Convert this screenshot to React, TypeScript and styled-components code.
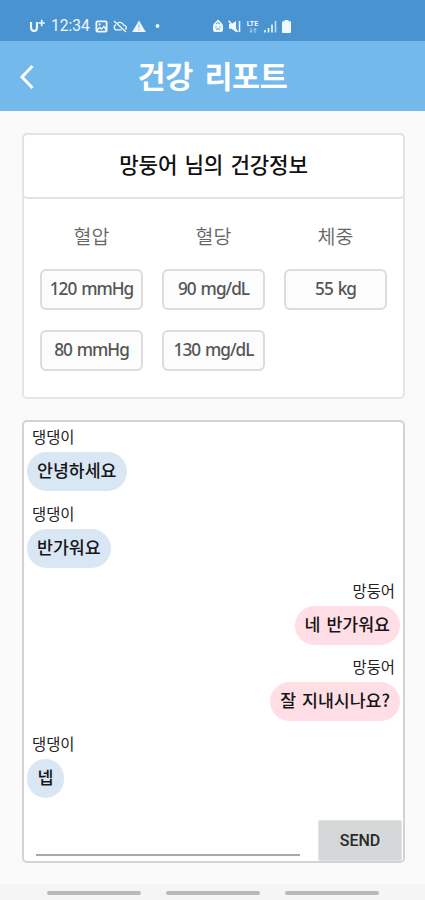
import React from "react";
import styled, { createGlobalStyle } from "styled-components";

const korean = `"Noto Sans CJK KR", sans-serif`;

const GlobalStyle = createGlobalStyle`
  * { box-sizing: border-box; }
  body { margin: 0; background: #fafafa; font-family: ${korean}; }
`;

const Screen = styled.div`
  width: 425px;
  height: 900px;
  display: flex;
  flex-direction: column;
  background: #fafafa;
  overflow: hidden;
`;

const StatusBar = styled.div`
  flex: none;
  height: 41px;
  padding: 11px 0 0 29px;
  display: flex;
  background: #4a93d1;
  color: #eef8ff;
`;

const StatusGroup = styled.div<{ $width: number; $gap: number }>`
  width: ${(p) => p.$width}px;
  height: 30px;
  display: flex;
  align-items: center;
  gap: ${(p) => p.$gap}px;
`;

const Clock = styled.span`
  width: 39px;
  font: 400 15.6px/30px Roboto, sans-serif;
`;

const Network = styled.span`
  display: flex;
  flex-direction: column;
  align-items: center;
  gap: 1px;
  width: 13px;
  font: 700 7.2px/7px Roboto, sans-serif;
`;

const Header = styled.header`
  flex: none;
  height: 70px;
  display: grid;
  grid-template-columns: 54px 1fr 54px;
  align-items: center;
  background: #73b9eb;
  color: #fff;
`;

const BackButton = styled.button`
  height: 70px;
  padding: 2px 0 0;
  border: 0;
  background: none;
  color: inherit;
  display: flex;
  align-items: center;
  justify-content: center;
`;

const Title = styled.h1`
  margin: 0;
  padding-bottom: 2px;
  font-size: 30.5px;
  font-weight: 700;
  line-height: 66px;
  letter-spacing: -0.4px;
  word-spacing: 5px;
  text-align: center;
`;

const Main = styled.main`
  flex: 1;
  padding: 22px 20px 0 22px;
  display: flex;
  flex-direction: column;
  gap: 21px;
`;

const Card = styled.section<{ $height: number; $line: string }>`
  height: ${(p) => p.$height}px;
  display: flex;
  flex-direction: column;
  border: 2px solid ${(p) => p.$line};
  border-radius: 5px;
  background: #fff;
`;

const CardTitle = styled.h2`
  height: 66px;
  margin: -2px -2px 0;
  border: 2px solid #e3e3e3;
  border-radius: 5px;
  font-size: 21.2px;
  font-weight: 500;
  line-height: 58px;
  letter-spacing: -0.2px;
  word-spacing: 2.8px;
  text-align: center;
  color: #111;
`;

const Metrics = styled.div`
  padding: 21px 16px 0;
  display: grid;
  grid-template-columns: repeat(3, 103px);
  column-gap: 19px;
`;

const Metric = styled.div`
  display: flex;
  flex-direction: column;
  gap: 20px;
`;

const MetricLabel = styled.div`
  height: 29px;
  font-size: 19.5px;
  font-weight: 350;
  line-height: 31px;
  text-align: center;
  color: #666;
`;

const Value = styled.div`
  height: 41px;
  border: 2px solid #dcdcdc;
  border-radius: 6px;
  background: #fcfcfc;
  color: #555;
  font: 500 17.2px/36px "Noto Sans", sans-serif;
  letter-spacing: -1px;
  word-spacing: 1.5px;
  white-space: nowrap;
  text-align: center;
`;

const Messages = styled.div`
  flex: 1;
  padding: 3px 3px 0;
`;

const Message = styled.div<{ $mine: boolean }>`
  height: 76.8px;
  display: flex;
  flex-direction: column;
  align-items: ${(p) => (p.$mine ? "flex-end" : "flex-start")};
`;

const Sender = styled.div`
  height: 27px;
  padding: 0 5px;
  font-size: 15.4px;
  line-height: 22px;
  color: #222;
`;

const Bubble = styled.div<{ $mine: boolean }>`
  height: 39px;
  min-width: 37px;
  padding: 0 10px;
  border-radius: 20px;
  background: ${(p) => (p.$mine ? "#ffdfe5" : "#d9e7f5")};
  color: #161616;
  font-size: 17.3px;
  font-weight: 500;
  line-height: 36px;
  word-spacing: 2px;
  text-align: center;
`;

const Composer = styled.form`
  height: 42px;
  padding: 0 1px 0 12px;
  display: flex;
  justify-content: space-between;
`;

const MessageInput = styled.input`
  width: 264px;
  height: 36px;
  margin-top: 1px;
  padding: 0;
  border: 0;
  border-bottom: 2px solid #a9a9a9;
  border-radius: 0;
  background: transparent;
  outline: 0;
  font: 16px ${korean};
`;

const SendButton = styled.button`
  width: 84px;
  height: 41px;
  margin-top: 1px;
  padding: 0;
  border: 1px solid #e1e3e3;
  border-radius: 2px;
  background: #d5d8d8;
  color: #2a2a2a;
  font: 500 16px/38px Roboto, sans-serif;
`;

const NavBar = styled.nav`
  flex: none;
  height: 16px;
  padding: 7px 46px 0 47px;
  display: flex;
  justify-content: space-between;
  background: #f5f5f5;
`;

const NavPill = styled.span`
  width: 94px;
  height: 4px;
  border-radius: 2px;
  background: #b9b9b9;
`;

const metrics = [
  { label: "혈압", values: ["120 mmHg", "80 mmHg"] },
  { label: "혈당", values: ["90 mg/dL", "130 mg/dL"] },
  { label: "체중", values: ["55 kg"] },
];

const messages = [
  { sender: "댕댕이", text: "안녕하세요", mine: false },
  { sender: "댕댕이", text: "반가워요", mine: false },
  { sender: "망둥어", text: "네 반가워요", mine: true },
  { sender: "망둥어", text: "잘 지내시나요?", mine: true },
  { sender: "댕댕이", text: "넵", mine: false },
];

const CarrierLogo = () => (
  <svg width="17" height="14" viewBox="0 0 17 14" fill="none" stroke="currentColor" role="img" aria-label="U+">
    <path d="M2 3v5.5Q2 12 5 12t3-3.500V3" strokeWidth="2.1" />
    <path d="M12.700.8v6.400M9.500 4h6.400" strokeWidth="1.7" />
  </svg>
);

const PictureIcon = () => (
  <svg width="13" height="13" viewBox="0 0 13 13">
    <rect x="0.5" y="0.5" width="12" height="12" rx="2" fill="currentColor" />
    <path d="M2.300 2.300h8.400v5.200L8.800 5.300 6.600 8.200 4.800 6.500 2.300 8.800ZM2.600 10.700 4.700 8.500l2 1.500 2.200-2.500 1.800 3.200Z" fill="#4a93d1" />
    <circle cx="4.600" cy="4.400" r="1.100" fill="currentColor" />
  </svg>
);

const CloudOffIcon = () => (
  <svg width="14" height="13" viewBox="0 0 14 13" fill="none" stroke="currentColor" strokeWidth="1.3">
    <path d="M1 1 13 12M4.600 3.100c2.300-1.600 5.300-.5 5.900 2.100 2.600.1 3.600 2.700 1.900 4.300M3 4.600C.4 5.700.6 9.900 3.800 9.900h4.800" />
  </svg>
);

const WarningIcon = () => (
  <svg width="14" height="13" viewBox="0 0 14 13">
    <path d="M7 .5 13.800 12H.2Z" fill="currentColor" />
    <path d="M7 4.500v3.800M7 9.300v1.300" stroke="#4a93d1" strokeWidth="1" opacity="0.6" />
  </svg>
);

const DotIcon = () => (
  <svg width="11" height="4" viewBox="0 0 11 4">
    <circle cx="6.500" cy="2" r="1.900" fill="currentColor" />
  </svg>
);

const LockIcon = () => (
  <svg width="10" height="14" viewBox="0 0 10 14">
    <path d="M2 3.500 5 .5l3 3Q10 5 10 7v4q0 2-2 2H2q-2 0-2-2V7q0-2 2-3.500Z" fill="currentColor" />
    <path d="M3.400 5.200a1.600 1.600 0 0 1 3.200 0M2.200 8h1.600M6.200 8h1.600M3 10.500q2-1.600 4 0" fill="none" stroke="#4a93d1" strokeWidth="0.9" />
  </svg>
);

const MuteIcon = () => (
  <svg width="13" height="13" viewBox="0 0 13 13" fill="none" stroke="currentColor">
    <path d="M1 4h2.500L8 1v11L3.500 8.800H1Z" fill="currentColor" stroke="none" />
    <path d="m.7.7 9 11.300" strokeWidth="1.500" />
    <path d="M11.500 1v11" strokeWidth="1.600" />
  </svg>
);

const DataArrows = () => (
  <svg width="8" height="5" viewBox="0 0 8 5" fill="none" stroke="currentColor" strokeWidth="0.9" opacity="0.7">
    <path d="M2 0v4.200M.5 3 2 4.400 3.500 3M6 5V.8M4.500 2 6 .6 7.500 2" />
  </svg>
);

const SignalIcon = () => (
  <svg width="13" height="13" viewBox="0 0 13 13" stroke="currentColor" strokeWidth="1.6">
    <path d="M1 12.500V10M4.500 12.500V8M8 12.500v-8" />
    <path d="M11.500 12.500V.8" opacity="0.75" />
  </svg>
);

const BatteryIcon = () => (
  <svg width="9" height="13" viewBox="0 0 9 13">
    <path d="M2.500 0h4v1.300H8q1 0 1 1V12q0 1-1 1H1q-1 0-1-1V2.300q0-1 1-1h1.500Z" fill="currentColor" />
  </svg>
);

export default function App() {
  return (
    <>
      <GlobalStyle />
      <Screen>
        <StatusBar>
          <StatusGroup $width={184} $gap={5}>
            <CarrierLogo />
            <Clock>12:34</Clock>
            <PictureIcon />
            <CloudOffIcon />
            <WarningIcon />
            <DotIcon />
          </StatusGroup>
          <StatusGroup $width={90} $gap={5}>
            <LockIcon />
            <MuteIcon />
            <Network>
              LTE
              <DataArrows />
            </Network>
            <SignalIcon />
            <BatteryIcon />
          </StatusGroup>
        </StatusBar>
        <Header>
          <BackButton aria-label="뒤로">
            <svg width="16" height="26" viewBox="0 0 16 26" fill="none" stroke="currentColor" strokeWidth="3">
              <path d="M13.500 2 3 13l10.500 11" />
            </svg>
          </BackButton>
          <Title>건강 리포트</Title>
        </Header>
        <Main>
          <Card $height={266} $line="#e5e5e5">
            <CardTitle>망둥어 님의 건강정보</CardTitle>
            <Metrics>
              {metrics.map((m) => (
                <Metric key={m.label}>
                  <MetricLabel>{m.label}</MetricLabel>
                  {m.values.map((v) => (
                    <Value key={v}>{v}</Value>
                  ))}
                </Metric>
              ))}
            </Metrics>
          </Card>
          <Card $height={443} $line="#d3d3d3">
            <Messages>
              {messages.map((m, i) => (
                <Message key={i} $mine={m.mine}>
                  <Sender>{m.sender}</Sender>
                  <Bubble $mine={m.mine}>{m.text}</Bubble>
                </Message>
              ))}
            </Messages>
            <Composer onSubmit={(e) => e.preventDefault()}>
              <MessageInput aria-label="메시지" />
              <SendButton type="submit">SEND</SendButton>
            </Composer>
          </Card>
        </Main>
        <NavBar>
          <NavPill />
          <NavPill />
          <NavPill />
        </NavBar>
      </Screen>
    </>
  );
}
